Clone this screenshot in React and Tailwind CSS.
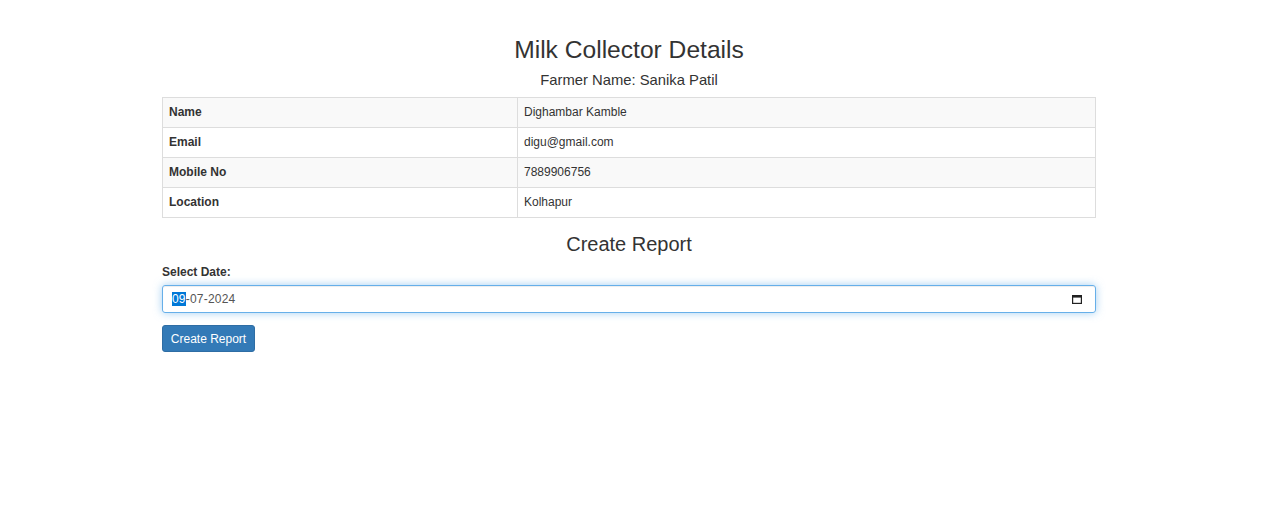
const rows = [
  { label: "Name", value: "Dighambar Kamble" },
  { label: "Email", value: "digu@gmail.com" },
  { label: "Mobile No", value: "7889906756" },
  { label: "Location", value: "Kolhapur" },
];

function CalendarIcon() {
  return (
    <svg width="10" height="9" viewBox="0 0 10 9" className="text-[#222]">
      <rect x="0.6" y="0.6" width="8.8" height="7.8" fill="none" stroke="currentColor" strokeWidth="1.2" />
      <rect x="0.6" y="0.6" width="8.8" height="2" fill="currentColor" />
    </svg>
  );
}

export default function App() {
  return (
    <div className="min-h-screen w-[1258px] bg-white pt-[37px] text-[#333] font-['Liberation_Sans',Arial,sans-serif]">
      <div className="mx-auto w-[934px]">
        <h3 className="text-center text-[24.6px] leading-[26px]">Milk Collector Details</h3>
        <h5 className="mt-[8px] text-center text-[14.8px] leading-[18px]">
          Farmer Name: Sanika Patil
        </h5>

        <table className="mt-[8px] w-full border-collapse border border-[#ddd] text-[12px] leading-[17px]">
          <tbody>
            {rows.map((row, i) => (
              <tr key={row.label} className={i % 2 === 0 ? "bg-[#f9f9f9]" : "bg-white"}>
                <td className="w-[355px] border border-[#ddd] px-[6px] py-[6px] font-bold">
                  {row.label}
                </td>
                <td className="border border-[#ddd] px-[6px] py-[6px]">{row.value}</td>
              </tr>
            ))}
          </tbody>
        </table>

        <h4 className="mt-[15px] text-center text-[20px] leading-[22px]">Create Report</h4>

        <label className="mt-[9px] block text-[12px] font-bold leading-[17px]">Select Date:</label>
        <div className="mt-[4px] flex h-[28px] items-center justify-between rounded-[3px] border border-[#66afe9] pl-[9px] pr-[13px] text-[12px] text-[#555] shadow-[inset_0_1px_1px_rgba(0,0,0,0.075),0_0_8px_rgba(102,175,233,0.6)]">
          <span className="tracking-[0.2px]">
            <span className="bg-[#0078d7] text-white">09</span>-07-2024
          </span>
          <CalendarIcon />
        </div>

        <button
          type="button"
          className="mt-[12px] h-[27px] w-[93px] rounded-[3px] border border-[#2e6da4] bg-[#337ab7] text-[12px] text-white"
        >
          Create Report
        </button>
      </div>
    </div>
  );
}
